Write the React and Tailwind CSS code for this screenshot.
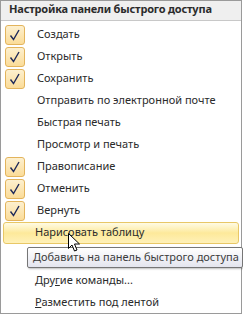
const ITEMS = [
  { label: 'Создать', checked: true },
  { label: 'Открыть', checked: true },
  { label: 'Сохранить', checked: true },
  { label: 'Отправить по электронной почте' },
  { label: 'Быстрая печать' },
  { label: 'Просмотр и печать' },
  { label: 'Правописание', checked: true },
  { label: 'Отменить', checked: true },
  { label: 'Вернуть', checked: true },
];

const font = { fontFamily: '"Noto Sans", "Open Sans", sans-serif' };

function CheckBox() {
  return (
    <div className="flex h-[20px] w-[20px] items-center justify-center rounded-[3px] border border-[#e3b45c] bg-gradient-to-b from-[#fdf0cf] to-[#fbdc98]">
      <svg width="12" height="12" viewBox="0 0 12 12" aria-hidden="true">
        <path d="M1.5 6.5 L4.5 10.5 L10 1" fill="none" stroke="#1f2a5a" strokeWidth="1.4" />
      </svg>
    </div>
  );
}

function Row({ item }) {
  return (
    <div className="flex h-[22px] items-center pl-[4px]">
      <div className="w-[20px]">{item.checked ? <CheckBox /> : null}</div>
      <span className="ml-[12px] text-[11px] text-[#2b2b2b]">{item.label}</span>
    </div>
  );
}

export default function App() {
  return (
    <div className="h-[314px] w-[243px] bg-white" style={font}>
      <div className="relative flex h-[314px] w-[242px] flex-col border border-[#9a9a9a] bg-white">
        <div className="flex h-[22px] items-end whitespace-nowrap border-b border-[#c8c8c8] bg-[#efefef] pb-[2px] pl-[8px] text-[11px] font-bold tracking-[-0.2px] text-[#2b2b2b]">
          Настройка панели быстрого доступа
        </div>
        <div className="flex flex-col pt-[3px]">
          {ITEMS.map((item) => <Row key={item.label} item={item} />)}
          <div className="mx-[2px] flex h-[22px] items-center rounded-[3px] border border-[#e8c766] bg-gradient-to-b from-[#fffbe4] via-[#fde99a] to-[#fff1b8] pl-[31px] text-[11px] text-[#2b2b2b]">
            Нарисовать таблицу
          </div>
          <div className="h-[26px]" />
          <div className="flex h-[22px] items-center pl-[34px] text-[11px] text-[#2b2b2b]">
            <span>Дру<span className="underline">г</span>ие команды...</span>
          </div>
          <div className="flex h-[22px] items-center pl-[34px] text-[11px] text-[#2b2b2b]">
            <span><span className="underline">Р</span>азместить под лентой</span>
          </div>
        </div>

        <div className="absolute left-[26px] top-[246px] flex h-[21px] w-[216px] items-center whitespace-nowrap rounded-[2px] border border-[#767676] bg-gradient-to-b from-white to-[#e4e5ee] pl-[5px] text-[11px] text-[#3c3c3c] shadow-[1px_1px_2px_rgba(0,0,0,0.25)]">
          Добавить на панель быстрого доступа
        </div>

        <svg className="absolute left-[67px] top-[232px]" width="13" height="20" viewBox="0 0 13 20" aria-hidden="true">
          <path d="M0.5 0.5 L0.5 15.5 L4 12 L6.5 18 L9 17 L6.5 11 L11.5 11 Z" fill="white" stroke="black" strokeWidth="1" strokeLinejoin="miter" />
        </svg>
      </div>
    </div>
  );
}
